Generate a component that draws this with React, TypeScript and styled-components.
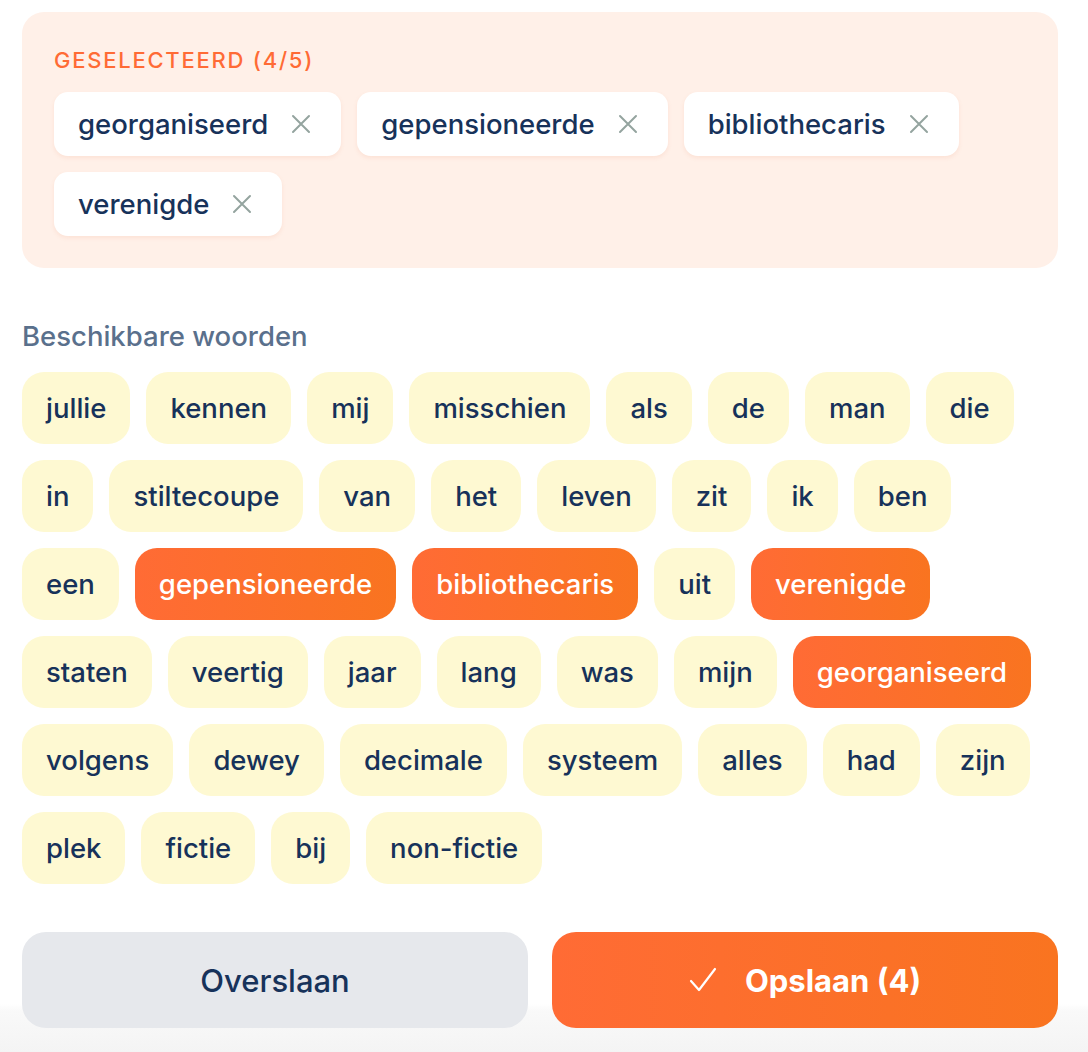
import React, { useState } from "react";
import styled, { createGlobalStyle } from "styled-components";

const GlobalStyle = createGlobalStyle`
  html, body {
    margin: 0;
    padding: 0;
    background: #ffffff;
    font-family: Inter, "Noto Sans", sans-serif;
  }
`;

const Page = styled.div`
  min-height: 100vh;
  display: flex;
  flex-direction: column;
`;

const Content = styled.div`
  padding: 12px 30px 0 22px;
`;

const SelectedPanel = styled.section`
  background: #fff0e8;
  border-radius: 22px;
  padding: 32px;
`;

const PanelLabel = styled.div`
  color: #ff6b35;
  font-size: 22px;
  font-weight: 500;
  letter-spacing: 0.08em;
  text-transform: uppercase;
  line-height: 32px;
  margin-bottom: 16px;
`;

const ChipWrap = styled.div<{ $gap: number }>`
  display: flex;
  flex-wrap: wrap;
  gap: ${(p) => p.$gap}px;
`;

const SelectedChip = styled.div`
  display: inline-flex;
  align-items: center;
  height: 64px;
  padding: 0 26px 0 24px;
  background: #ffffff;
  border-radius: 14px;
  box-shadow: 0 2px 4px rgba(234, 120, 80, 0.12);
  color: #17325a;
  font-size: 27.5px;
  font-weight: 500;
`;

const RemoveButton = styled.button`
  display: inline-flex;
  align-items: center;
  justify-content: center;
  margin-left: 19px;
  padding: 4px;
  border: none;
  background: transparent;
  color: #94a49f;
  cursor: pointer;
`;

const SectionTitle = styled.h2`
  margin: 50px 0 18px;
  color: #5a708c;
  font-size: 27.5px;
  font-weight: 450;
  line-height: 36px;
`;

const WordChip = styled.button<{ $active: boolean }>`
  height: 72px;
  padding: 0 24px;
  border: none;
  border-radius: 22px;
  font-family: inherit;
  font-size: 27.5px;
  font-weight: 500;
  cursor: pointer;
  color: ${(p) => (p.$active ? "#ffffff" : "#17325a")};
  background: ${(p) =>
    p.$active ? "linear-gradient(90deg, #ff6b35 0%, #f97420 100%)" : "#fef9d2"};
`;

const Footer = styled.footer`
  margin-top: 48px;
  padding: 0 30px 24px 22px;
  display: grid;
  grid-template-columns: 1fr 1fr;
  gap: 24px;
  background: linear-gradient(
    to bottom,
    #ffffff 0%,
    #ffffff 60%,
    #f9f9f9 66%,
    #f4f4f4 100%
  );
  flex: 1;
  align-content: start;
`;

const ActionButton = styled.button<{ $primary?: boolean }>`
  height: 96px;
  border: none;
  border-radius: 24px;
  display: flex;
  align-items: center;
  justify-content: center;
  gap: 28px;
  font-family: inherit;
  font-size: 31px;
  font-weight: ${(p) => (p.$primary ? 700 : 500)};
  color: ${(p) => (p.$primary ? "#ffffff" : "#17325a")};
  background: ${(p) =>
    p.$primary ? "linear-gradient(90deg, #ff6b35 0%, #f97420 100%)" : "#e6e8ec"};
  cursor: pointer;
`;

const CloseIcon = () => (
  <svg width="20" height="20" viewBox="0 0 20 20" fill="none">
    <path d="M2 2L18 18M18 2L2 18" stroke="currentColor" strokeWidth="2" strokeLinecap="round" />
  </svg>
);

const CheckIcon = () => (
  <svg width="28" height="26" viewBox="0 0 28 26" fill="none">
    <path d="M2 14L10 23L26 2" stroke="currentColor" strokeWidth="2.2" strokeLinecap="round" strokeLinejoin="round" />
  </svg>
);

const words = [
  "jullie", "kennen", "mij", "misschien", "als", "de", "man", "die",
  "in", "stiltecoupe", "van", "het", "leven", "zit", "ik", "ben",
  "een", "gepensioneerde", "bibliothecaris", "uit", "verenigde",
  "staten", "veertig", "jaar", "lang", "was", "mijn", "georganiseerd",
  "volgens", "dewey", "decimale", "systeem", "alles", "had", "zijn",
  "plek", "fictie", "bij", "non-fictie",
];

export default function App() {
  const [selected, setSelected] = useState<string[]>([
    "georganiseerd",
    "gepensioneerde",
    "bibliothecaris",
    "verenigde",
  ]);
  const max = 5;

  const toggle = (w: string) => {
    setSelected((cur) =>
      cur.includes(w) ? cur.filter((x) => x !== w) : cur.length < max ? [...cur, w] : cur
    );
  };

  return (
    <Page>
      <GlobalStyle />
      <Content>
        <SelectedPanel>
          <PanelLabel>
            Geselecteerd ({selected.length}/{max})
          </PanelLabel>
          <ChipWrap $gap={16}>
            {selected.map((w) => (
              <SelectedChip key={w}>
                {w}
                <RemoveButton aria-label={`Verwijder ${w}`} onClick={() => toggle(w)}>
                  <CloseIcon />
                </RemoveButton>
              </SelectedChip>
            ))}
          </ChipWrap>
        </SelectedPanel>

        <SectionTitle>Beschikbare woorden</SectionTitle>
        <ChipWrap $gap={16}>
          {words.map((w, i) => (
            <WordChip key={w + i} $active={selected.includes(w)} onClick={() => toggle(w)}>
              {w}
            </WordChip>
          ))}
        </ChipWrap>
      </Content>

      <Footer>
        <ActionButton>Overslaan</ActionButton>
        <ActionButton $primary>
          <CheckIcon />
          Opslaan ({selected.length})
        </ActionButton>
      </Footer>
    </Page>
  );
}
